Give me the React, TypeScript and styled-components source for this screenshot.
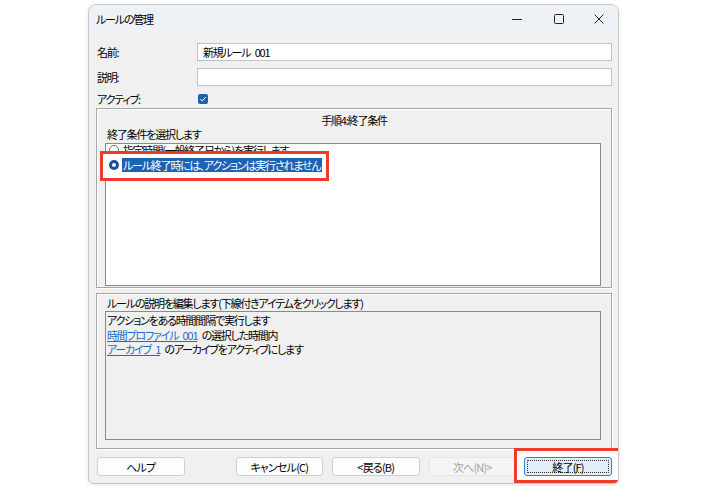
import React from 'react';
import styled, { createGlobalStyle } from 'styled-components';

const Global = createGlobalStyle`
  html, body { margin: 0; padding: 0; background: #ffffff; }
  body {
    font-family: "Noto Sans CJK JP", "Noto Sans", sans-serif;
    font-size: 11px;
    letter-spacing: -1.2px;
    word-spacing: 3px;
    color: #000;
    font-feature-settings: "palt";
  }
`;

const Stage = styled.div`
  width: 708px;
  height: 487px;
  box-sizing: border-box;
  padding: 4px 0 0 88px;
`;

const Window = styled.div`
  position: relative;
  width: 531px;
  height: 480px;
  box-sizing: border-box;
  border: 1px solid #c9c9c9;
  border-radius: 8px 8px 5px 5px;
  background: #f0f0f0;
  display: flex;
  flex-direction: column;
  overflow: hidden;
  box-shadow: 0 1px 4px rgba(0, 0, 0, 0.1);
`;

const TitleBar = styled.div`
  height: 28px;
  flex: none;
  background: #eef1f6;
  display: flex;
  align-items: center;
  padding-left: 7px;
`;

const TitleText = styled.div`
  flex: 1;
`;

const CaptionButton = styled.div<{ $w: number }>`
  width: ${p => p.$w}px;
  height: 28px;
  display: flex;
  align-items: center;
  justify-content: center;
`;

const Content = styled.div`
  flex: 1;
  display: flex;
  flex-direction: column;
  padding: 10px 6px 0 7px;
`;

const Form = styled.div`
  display: grid;
  grid-template-columns: 101px 1fr;
  grid-template-rows: 18px 18px 11px;
  row-gap: 7px;
  align-items: center;
`;

const Label = styled.div`
  padding-left: 1px;
  line-height: 14px;
`;

const TextInput = styled.div`
  height: 18px;
  box-sizing: border-box;
  border: 1px solid #c2c2c2;
  background: #fff;
  padding-left: 5px;
  line-height: 16px;
`;

const Check = styled.div`
  width: 10px;
  height: 10px;
  border-radius: 2px;
  background: #1b62b5;
  margin-left: 1px;
  display: flex;
  align-items: center;
  justify-content: center;
`;

const Group = styled.div<{ $h: number; $top: number; $pb: number }>`
  height: ${p => p.$h}px;
  margin-top: ${p => p.$top}px;
  box-sizing: border-box;
  border: 1px solid #a6a6a6;
  box-shadow: inset 1px 1px 0 #ffffff, 1px 1px 0 #ffffff;
  display: flex;
  flex-direction: column;
  padding: 2px 10px ${p => p.$pb}px 8px;
`;

const GroupTitle = styled.div`
  text-align: center;
  line-height: 14px;
  margin-top: 2px;
  padding-left: 2px;
`;

const GroupLabel = styled.div`
  line-height: 14px;
  padding-left: 2px;
`;

const ListBox = styled.div`
  flex: 1;
  margin-top: 2px;
  border: 1px solid #8a8a8a;
  background: #fff;
  display: flex;
  flex-direction: column;
`;

const Item = styled.div<{ $shift?: number }>`
  position: relative;
  height: 14px;
  margin-top: ${p => p.$shift ?? 0}px;
  display: flex;
  align-items: center;
  gap: 3px;
  padding-left: 2px;
  white-space: nowrap;
`;

const Highlight = styled.div`
  position: absolute;
  left: -6px;
  top: -7px;
  width: 229px;
  height: 30px;
  box-sizing: border-box;
  border: 3px solid #ef3b2c;
  background: #fff;
  z-index: 0;
`;

const ItemBody = styled.div`
  position: relative;
  z-index: 1;
  display: flex;
  align-items: center;
  gap: 3px;
`;

const Radio = styled.div<{ $on?: boolean }>`
  width: 10px;
  height: 10px;
  border-radius: 50%;
  box-sizing: border-box;
  border: ${p => (p.$on ? '3px solid #1b4f93' : '1px solid #6d6d6d')};
  background: #fff;
  margin-left: 1px;
`;

const ItemText = styled.span<{ $sel?: boolean }>`
  line-height: 14px;
  padding: 0 2px 0 1px;
  background: ${p => (p.$sel ? '#1c63b5' : 'transparent')};
  color: ${p => (p.$sel ? '#fff' : '#000')};
`;

const DescBox = styled.div`
  flex: 1;
  margin-top: 1px;
  border: 1px solid #8a8a8a;
  background: #f0f0f0;
  padding: 1px 0 0 1px;
  display: flex;
  flex-direction: column;
`;

const DescLine = styled.div`
  line-height: 14.5px;
`;

const Link = styled.span`
  color: #1f6cc4;
  text-decoration: underline;
  text-underline-offset: 1px;
`;

const ButtonRow = styled.div`
  display: flex;
  align-items: center;
  margin-top: 8px;
  padding-left: 1px;
`;

const Btn = styled.div<{ $kind?: 'normal' | 'disabled' | 'default'; $ml?: number }>`
  position: relative;
  width: 88px;
  height: 19px;
  box-sizing: border-box;
  margin-left: ${p => p.$ml ?? 0}px;
  border-radius: 3px;
  display: flex;
  align-items: center;
  justify-content: center;
  font-size: 11px;
  letter-spacing: -0.8px;
  background: ${p => (p.$kind === 'disabled' ? '#f5f5f5' : p.$kind === 'default' ? '#e1edf8' : '#fdfdfd')};
  color: ${p => (p.$kind === 'disabled' ? '#a3a3a3' : '#000')};
  border: 1px solid ${p => (p.$kind === 'disabled' ? '#e6e6e6' : p.$kind === 'default' ? '#2f7fd0' : '#d0d0d0')};
`;

const FocusRing = styled.div`
  position: absolute;
  inset: 2px;
  border: 1px dotted #333;
  border-radius: 1px;
`;

const BtnHighlight = styled.div`
  position: absolute;
  left: -10px;
  top: -9px;
  right: -9px;
  bottom: -7px;
  border: 3px solid #ef3b2c;
  background: #fff;
  z-index: 0;
`;

const BtnLabel = styled.span`
  position: relative;
  z-index: 1;
`;

const DefaultBtnWrap = styled.div`
  position: relative;
  margin-left: 8px;
`;

const DefaultInner = styled(Btn)`
  z-index: 1;
`;

export default function App() {
  return (
    <Stage>
      <Global />
      <Window>
        <TitleBar>
          <TitleText>ルールの管理</TitleText>
          <CaptionButton $w={42}>
            <svg width="10" height="10" viewBox="0 0 10 10">
              <line x1="0" y1="5.5" x2="10" y2="5.5" stroke="#222" strokeWidth="1" />
            </svg>
          </CaptionButton>
          <CaptionButton $w={42}>
            <svg width="10" height="10" viewBox="0 0 10 10">
              <rect x="0.5" y="0.5" width="9" height="9" rx="1" fill="none" stroke="#222" strokeWidth="1" />
            </svg>
          </CaptionButton>
          <CaptionButton $w={38}>
            <svg width="10" height="10" viewBox="0 0 10 10">
              <path d="M0.5 0.5 L9.5 9.5 M9.5 0.5 L0.5 9.5" stroke="#222" strokeWidth="1" />
            </svg>
          </CaptionButton>
        </TitleBar>
        <Content>
          <Form>
            <Label>名前:</Label>
            <TextInput>新規ルール 001</TextInput>
            <Label>説明:</Label>
            <TextInput />
            <Label>アクティブ:</Label>
            <Check>
              <svg width="8" height="8" viewBox="0 0 8 8">
                <path d="M1.3 4.2 L3.2 6 L6.8 2" fill="none" stroke="#fff" strokeWidth="1" />
              </svg>
            </Check>
          </Form>

          <Group $h={180} $top={4} $pb={1}>
            <GroupTitle>手順4:終了条件</GroupTitle>
            <GroupLabel>終了条件を選択します</GroupLabel>
            <ListBox>
              <Item $shift={-1}>
                <Radio />
                <ItemText>指定時間(一般終了日から)を実行します</ItemText>
              </Item>
              <Item $shift={1}>
                <Highlight />
                <ItemBody>
                  <Radio $on />
                  <ItemText $sel>ルール終了時には、アクションは実行されません</ItemText>
                </ItemBody>
              </Item>
            </ListBox>
          </Group>

          <Group $h={156} $top={5} $pb={8}>
            <GroupLabel>ルールの説明を編集します(下線付きアイテムをクリックします)</GroupLabel>
            <DescBox>
              <DescLine>アクションをある時間間隔で実行します</DescLine>
              <DescLine>
                <Link>時間プロファイル 001</Link> の選択した時間内
              </DescLine>
              <DescLine>
                <Link>アーカイブ 1</Link> のアーカイブをアクティブにします
              </DescLine>
            </DescBox>
          </Group>

          <ButtonRow>
            <Btn>ヘルプ</Btn>
            <Btn $ml={51}>キャンセル(C)</Btn>
            <Btn $ml={9}>&lt;戻る(B)</Btn>
            <Btn $ml={9} $kind="disabled">次へ(N)&gt;</Btn>
            <DefaultBtnWrap>
              <BtnHighlight />
              <DefaultInner $kind="default">
                <FocusRing />
                <BtnLabel>終了(F)</BtnLabel>
              </DefaultInner>
            </DefaultBtnWrap>
          </ButtonRow>
        </Content>
      </Window>
    </Stage>
  );
}
